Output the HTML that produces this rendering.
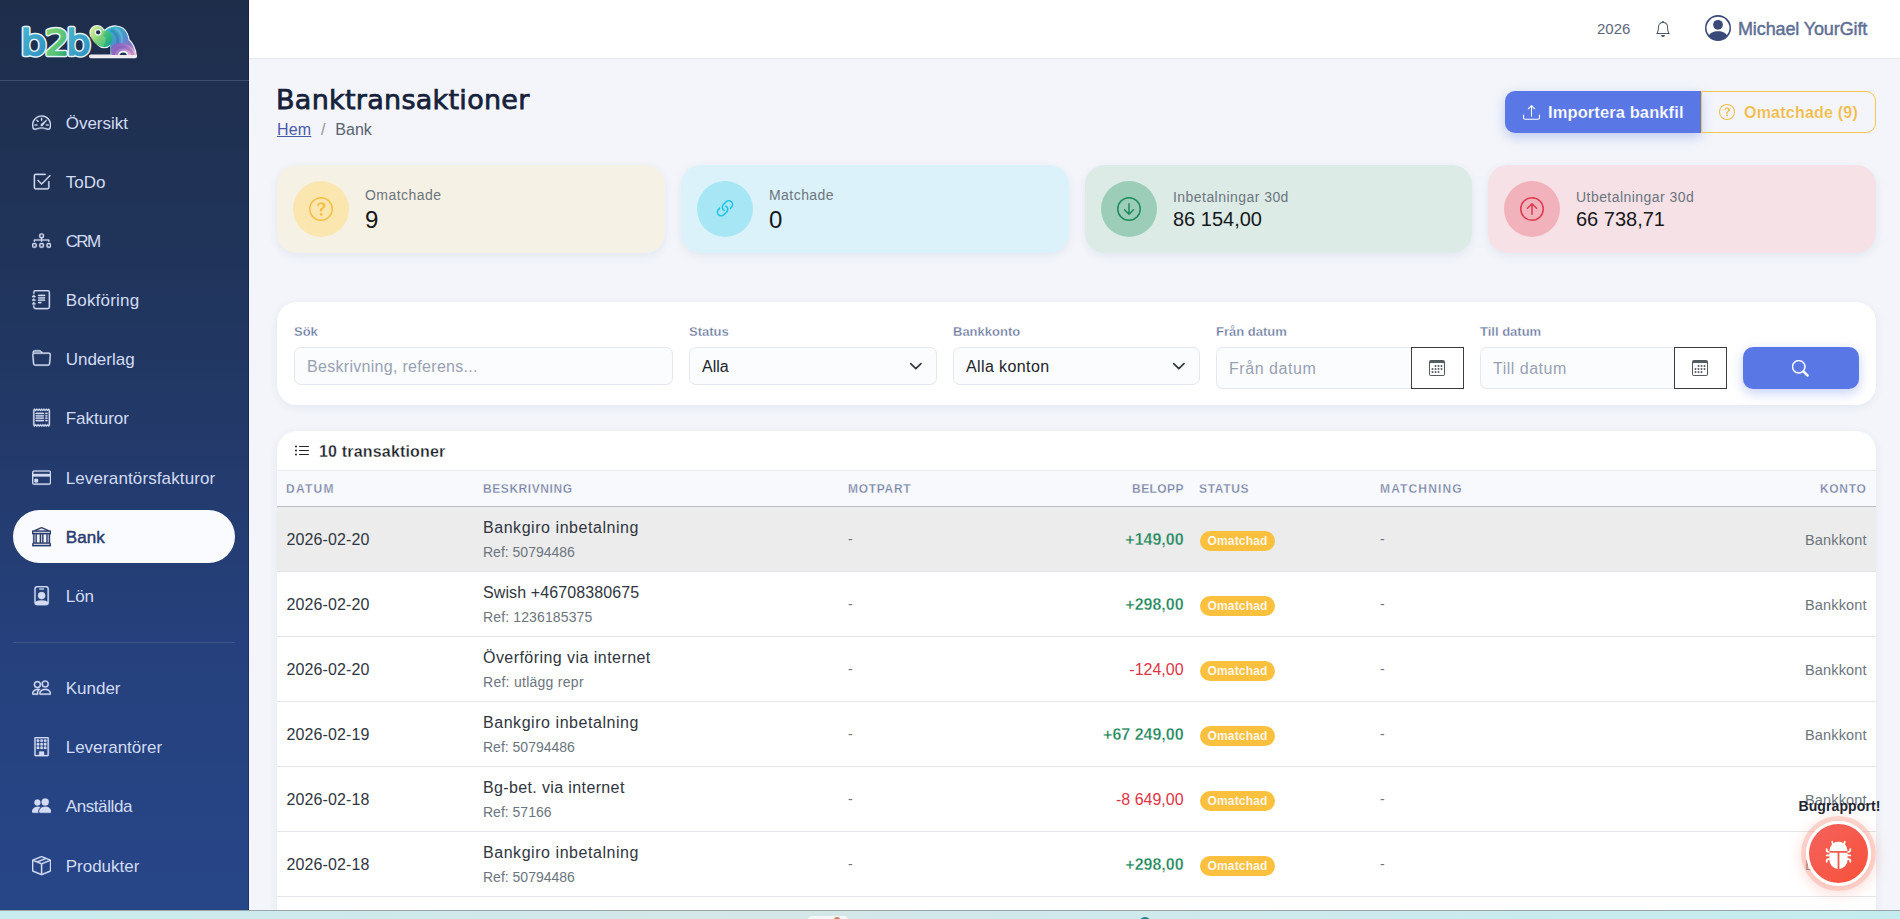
<!DOCTYPE html>
<html lang="sv">
<head>
<meta charset="utf-8">
<title>Banktransaktioner</title>
<style>
*{box-sizing:border-box;margin:0;padding:0}
html,body{width:1900px;height:919px;overflow:hidden}
body{font-family:"Liberation Sans",sans-serif;font-size:16px;color:#212529;background:#f3f5fa;position:relative}
svg{display:block}
.abs{position:absolute}
/* sidebar */
#sidebar{position:absolute;left:0;top:0;width:249px;height:910px;box-shadow:inset -1px 0 0 rgba(8,16,40,.3);background:linear-gradient(180deg,#1e2d4a 0%,#21365f 35%,#25407c 70%,#274688 100%)}
#logo{position:absolute;left:0;top:0;width:249px;height:81px;border-bottom:1px solid #3b4d6f}
.nav{position:absolute;left:13px;width:222px;height:52px;border-radius:26px;color:#d3dcf3;font-size:17px}
.nav svg{position:absolute;left:18.6px;top:16.4px;width:19.2px;height:19.2px;fill:currentColor;stroke:currentColor;stroke-width:.28px}
.nav span{position:absolute;left:52.7px;top:1px;line-height:52px;white-space:nowrap}
.nav.active{background:#fafbff;color:#2b3c6e;margin-top:-.7px;height:53px;border-radius:26.5px}
.nav.active svg{top:17.1px}.nav.active span{top:1.7px}
.nav.active span{-webkit-text-stroke:.45px #2b3c6e;letter-spacing:.1px}
#sdiv{position:absolute;left:13px;top:642px;width:222px;height:1px;background:#3f5688}
/* topbar */
#topbar{position:absolute;left:249px;top:0;width:1651px;height:59px;background:#fff;border-bottom:1px solid #e3e6ec}
/* bottom strip */
#strip{position:absolute;left:0;top:910px;width:1900px;height:9px;background:linear-gradient(90deg,#c9ecee 0%,#d5e6e8 40%,#cfe9ec 60%,#c4ecef 100%);border-top:1px solid #9aa5a8}

/* topbar content */
#year{position:absolute;left:1348px;top:0;line-height:58px;font-size:15px;color:#5d6778}
#bell{position:absolute;left:1405.6px;top:21px;width:16px;height:16px;fill:#4a5568}
#avatar{position:absolute;left:1455.5px;top:14.8px;width:26px;height:26px;fill:#3a4a78}
#uname{position:absolute;left:1489px;top:0;line-height:58px;font-size:18px;color:#5e6f94;letter-spacing:-.12px;-webkit-text-stroke:.45px #5e6f94;white-space:nowrap}
/* header */
#title{position:absolute;left:276px;top:81px;letter-spacing:.28px;font-family:"DejaVu Sans","Liberation Sans",sans-serif;font-size:27px;line-height:38px;-webkit-text-stroke:.75px #16213a;color:#16213a;white-space:nowrap}
#crumb{position:absolute;left:277px;top:119px;font-size:16px;line-height:22px;color:#5a6270;white-space:nowrap}
#crumb a{letter-spacing:.2px;color:#4a5aa8;text-decoration:underline}
#crumb i{font-style:normal;color:#8a93a3;padding:0 10px 0 9.5px}
#btn1{position:absolute;left:1505px;top:91px;width:196px;height:42px;background:#5a77e6;border-radius:10px 0 0 10px;color:#fff;font-weight:bold;font-size:16.5px;letter-spacing:.1px;line-height:42px;box-shadow:0 4px 12px rgba(90,119,230,.35)}
#btn1 svg{position:absolute;left:17.5px;top:12.6px;width:17px;height:17px;fill:#fff}
#btn1 span{position:absolute;left:43px;top:0;white-space:nowrap}
#btn2{position:absolute;left:1701px;top:91px;width:175px;height:42px;border:1px solid #f5c451;border-radius:0 10px 10px 0;color:#f2bb45;font-weight:bold;font-size:16px;letter-spacing:.22px;line-height:41px}
#btn2 svg{position:absolute;left:17px;top:12px;width:16px;height:16px;fill:#f2bb45}
#btn2 span{position:absolute;left:42px;top:0;white-space:nowrap}
/* stat cards */
.stat{position:absolute;top:165px;height:88px;border-radius:20px;box-shadow:0 3px 10px rgba(40,60,120,.08)}
.stat .circ{position:absolute;left:16px;top:16px;width:56px;height:56px;border-radius:50%}
.stat .circ svg{position:absolute;left:16px;top:16px;width:24px;height:24px}
.stat .lbl{position:absolute;left:88px;top:20px;letter-spacing:.45px;font-size:14px;line-height:20px;color:#6c757d;white-space:nowrap}
.stat .val{position:absolute;left:88px;top:40px;font-size:20px;line-height:28px;color:#16181b;white-space:nowrap}

/* filter card */
#filter{position:absolute;left:277px;top:301.5px;width:1599px;height:103px;background:#fff;border-radius:20px;box-shadow:0 2px 10px rgba(40,60,120,.07)}
.flbl{position:absolute;top:21.5px;font-size:13px;line-height:18px;font-weight:bold;color:#6b7a9f;white-space:nowrap}
.finp{position:absolute;top:45.5px;height:38px;border:1px solid #e4e7ee;border-radius:7px;background:#fbfcfe;font-size:16px;line-height:38px;padding-left:12px;color:#212529;white-space:nowrap}
.finp.ph{color:#98a1b3}
.finp svg{position:absolute;right:13px;top:12.75px;width:13.7px;height:10.3px}
.fdate{height:42px;line-height:42px;border-radius:7px 0 0 7px;border-right:none}
.fcal{position:absolute;top:45.5px;width:53px;height:42px;border:1px solid #3d3d3d;background:#fff}
.fcal svg{position:absolute;left:17.2px;top:12px;width:16px;height:16px;fill:#555b63}
#fsearch{position:absolute;left:1466px;top:45.5px;width:116px;height:42px;border-radius:10px;background:#5a77e6;box-shadow:0 4px 12px rgba(90,119,230,.35)}
#fsearch svg{position:absolute;left:49.2px;top:13px;width:16.6px;height:16.6px;fill:#fff;stroke:#fff;stroke-width:.5px}
/* table card */
#tcard>div{margin-top:-.7px}
#tcard{position:absolute;left:277px;top:430.7px;width:1599px;height:520px;background:#fff;border-radius:20px 20px 0 0;box-shadow:0 2px 10px rgba(40,60,120,.07);overflow:hidden}
#thead1{position:absolute;left:0;top:0;width:100%;height:41px;border-bottom:1px solid #e6e9ef}
#thead1 svg{position:absolute;left:17px;top:13px;width:16px;height:16px;fill:#212529}
#thead1 span{position:absolute;left:42px;top:0;line-height:44px;letter-spacing:.18px;font-size:16px;font-weight:bold;color:#1b1f27;white-space:nowrap}
#thead2{position:absolute;left:0;top:41px;width:100%;height:36px;background:#f8f9fc;border-bottom:1px solid #b9bcc2}
.th{position:absolute;top:0;line-height:37px;font-size:12px;font-weight:bold;letter-spacing:1px;color:#7683a5;white-space:nowrap}
.tr{position:absolute;left:0;width:100%;height:65px;border-bottom:1px solid #e3e5ea}
.tr.hov{background:#ececec}
.tr div{position:absolute;white-space:nowrap}
.c1{left:9.5px;top:0;line-height:66px;letter-spacing:.12px;font-size:16px;color:#2f3640}
.c2a{left:206px;top:9px;line-height:24px;font-size:16px;color:#2f3640}
.c2b{left:206px;top:35px;line-height:21px;font-size:14px;color:#6c757d}
.c3{left:571px;top:0;line-height:65px;font-size:14px;color:#6c757d}
.c4{right:692.4px;top:0;line-height:66px;font-size:16px}
.c4.pos{color:#1a8558;font-weight:bold}
.c4.neg{color:#dc3545}
.c5{left:923px;top:24px;width:75px;height:20px;border-radius:10px;background:#f8c13f;color:#fff;font-size:12px;letter-spacing:.18px;font-weight:bold;line-height:20px;text-align:center;background:#fbc03d}
.c6{left:1103px;top:0;line-height:65px;font-size:14px;color:#6c757d}
.c7{right:9.3px;top:0;line-height:67px;letter-spacing:.15px;font-size:14.5px;color:#6c757d}

#buglbl{position:absolute;left:1798.5px;top:796px;font-size:14px;letter-spacing:.1px;font-weight:bold;line-height:20px;color:#1e2530;white-space:nowrap}
#bug{position:absolute;left:1806.3px;top:821.3px;width:65px;height:65px;border-radius:50%;background:linear-gradient(135deg,#f4625c,#f8513a);border:3.5px solid #fff;box-shadow:0 0 0 5px rgba(250,150,130,.33),0 3px 14px 5px rgba(250,130,110,.28)}
#bug svg{position:absolute;left:14.5px;top:15.5px;width:29px;height:29px;fill:#fff}
.stat .val.big{font-size:24px;top:39px;line-height:32px}
.stat .lbl.low{top:22px}
#strip i{position:absolute;display:block}

.th{-webkit-text-stroke:.28px #f8f9fc}
#thead1 span{-webkit-text-stroke:.28px #fff}
.flbl{-webkit-text-stroke:.28px #fff}
#btn1 span{-webkit-text-stroke:.18px #5a77e6}
#btn2 span{-webkit-text-stroke:.18px #f3f5fa}
.c5{-webkit-text-stroke:.2px #fbc03d}
.c4.pos{-webkit-text-stroke:.3px #fff}
.tr.hov .c4.pos{-webkit-text-stroke:.3px #ececec}
</style>
</head>
<body>
<div id="sidebar">
  <div id="logo"><!--LOGO--><svg id="logosvg" viewBox="0 0 1900 702" style="position:absolute;left:15px;top:18px;width:130px;height:48px;overflow:visible">
<defs>
<linearGradient id="gB" x1="0" y1="0" x2="1" y2="1"><stop offset="0" stop-color="#4ab8d0"/><stop offset="1" stop-color="#2f8cc0"/></linearGradient>
<linearGradient id="g2" x1="0" y1="0" x2="1" y2="1"><stop offset="0" stop-color="#93d568"/><stop offset="0.6" stop-color="#55c27a"/><stop offset="1" stop-color="#0f8c5a"/></linearGradient>
<linearGradient id="gT" x1="0" y1="0.1" x2="1" y2="0.9"><stop offset="0" stop-color="#a5dc7c"/><stop offset="0.45" stop-color="#3fbf7a"/><stop offset="1" stop-color="#12a090"/></linearGradient>
<linearGradient id="gBody" x1="0.1" y1="0" x2="0.9" y2="1"><stop offset="0" stop-color="#35b9c0"/><stop offset="0.45" stop-color="#4a93cf"/><stop offset="0.75" stop-color="#8a72c6"/><stop offset="1" stop-color="#eab0cc"/></linearGradient>
<linearGradient id="gLeg" x1="0" y1="0" x2="1" y2="0.7"><stop offset="0" stop-color="#7457bd"/><stop offset="0.5" stop-color="#a57bc8"/><stop offset="1" stop-color="#f0b6cf"/></linearGradient>
<linearGradient id="gR" x1="0" y1="0.2" x2="1" y2="1"><stop offset="0" stop-color="#dcec98"/><stop offset="0.6" stop-color="#9bd97a"/><stop offset="1" stop-color="#4fc47c"/></linearGradient>
<linearGradient id="gT2" x1="0" y1="0" x2="1" y2="1"><stop offset="0" stop-color="#c3e48a"/><stop offset="0.5" stop-color="#7fd07a"/><stop offset="1" stop-color="#3fbf7a"/></linearGradient>
</defs>
<g font-family="'DejaVu Sans','Liberation Sans',sans-serif" font-size="515" stroke-linejoin="round" stroke-linecap="round">
<g fill="#e6f5fa" stroke="#e6f5fa" stroke-width="64">
<text transform="translate(78 540) scale(1.17 1)">b</text><text transform="translate(433 540) scale(1.1 1)">2</text><text transform="translate(750 540) scale(1.1 1)">b</text>
</g>
<g stroke-width="24">
<text transform="translate(78 540) scale(1.17 1)" fill="url(#gB)" stroke="url(#gB)">b</text><text transform="translate(433 540) scale(1.1 1)" fill="url(#g2)" stroke="url(#g2)">2</text><text transform="translate(750 540) scale(1.1 1)" fill="url(#gB)" stroke="url(#gB)">b</text>
</g>
</g>
<!-- elephant: white outline -->
<g fill="#eef6fb" stroke="#eef6fb" stroke-width="32" stroke-linejoin="round">
<circle cx="1200" cy="215" r="98"/>
<circle cx="1305" cy="305" r="122"/>
<path d="M1318 185 C1370 138 1430 122 1480 124 C1555 128 1610 170 1635 232 C1650 270 1656 298 1660 320 C1715 372 1758 452 1766 555 L1412 555 L1412 400 Z"/>
<rect x="1098" y="548" width="670" height="24" rx="12"/>
</g>
<!-- body -->
<path d="M1318 185 C1370 138 1430 122 1480 124 C1555 128 1610 170 1635 232 C1650 270 1656 298 1660 320 C1715 372 1758 452 1766 555 L1412 555 L1380 300 Z" fill="url(#gBody)"/>
<path d="M1400 175 C1485 210 1525 305 1492 410" fill="none" stroke="#2a78b0" stroke-opacity=".5" stroke-width="42"/>
<path d="M1470 150 C1555 200 1585 295 1556 390" fill="none" stroke="#8fd0e6" stroke-opacity=".35" stroke-width="36"/>
<!-- rear leg arch -->
<path d="M1412 555 L1412 440 C1430 385 1500 362 1570 368 C1690 385 1760 465 1768 555Z" fill="url(#gLeg)"/>
<path d="M1440 555 C1440 440 1560 400 1640 440 C1700 470 1720 520 1722 555" fill="none" stroke="#6a4db5" stroke-opacity=".35" stroke-width="40"/>
<!-- head disc + trunk -->
<circle cx="1305" cy="305" r="122" fill="url(#gT)"/>
<path d="M1103 235 C1110 330 1190 420 1300 425 L1330 300 L1250 215Z" fill="url(#gT2)"/>
<circle cx="1200" cy="215" r="98" fill="url(#gR)"/>
<!-- trunk hole -->
<circle cx="1215" cy="210" r="50" fill="#eef6fb"/>
<circle cx="1215" cy="210" r="31" fill="#1f3050"/>
<!-- gap between legs -->
<path d="M1505 555 C1505 455 1660 455 1660 555Z" fill="#eef6fb"/>
<path d="M1528 555 C1528 490 1637 490 1637 555Z" fill="#1f3050"/>
<!-- ground -->
<rect x="1088" y="540" width="682" height="38" rx="19" fill="#f1e9ef"/>
</svg>
<!--/LOGO--></div>
  <div id="sdiv"></div>
  <div class="nav" style="top:97px"><svg viewBox="0 0 16 16"><path d="M8 4a.5.5 0 0 1 .5.5V6a.5.5 0 0 1-1 0V4.500A.5.500 0 0 1 8 4M3.732 5.732a.5.500 0 0 1 .707 0l.915.914a.5.500 0 1 1-.708.708l-.914-.915a.5.500 0 0 1 0-.707M2 10a.5.500 0 0 1 .5-.5h1.586a.5.500 0 0 1 0 1H2.500A.5.500 0 0 1 2 10m9.500 0a.5.500 0 0 1 .5-.5h1.500a.5.500 0 0 1 0 1H12a.5.500 0 0 1-.5-.5m.754-4.246a.39.390 0 0 0-.527-.020L7.547 9.310a.91.910 0 1 0 1.302 1.258l3.434-4.297a.39.390 0 0 0-.029-.518z"/><path fill-rule="evenodd" d="M0 10a8 8 0 1 1 15.547 2.661c-.442 1.253-1.845 1.602-2.932 1.250C11.309 13.488 9.475 13 8 13c-1.474 0-3.310.488-4.615.911-1.087.352-2.490.003-2.932-1.250A8 8 0 0 1 0 10m8-7a7 7 0 0 0-6.603 9.329c.203.575.923.876 1.680.630C4.397 12.533 6.358 12 8 12s3.604.532 4.923.960c.757.245 1.477-.056 1.680-.631A7 7 0 0 0 8 3"/></svg><span>Översikt</span></div>
  <div class="nav" style="top:156px"><svg viewBox="0 0 16 16"><path d="M3 14.500A1.500 1.500 0 0 1 1.500 13V3A1.500 1.500 0 0 1 3 1.500h8a.5.500 0 0 1 0 1H3a.5.500 0 0 0-.5.5v10a.5.500 0 0 0 .5.5h10a.5.500 0 0 0 .5-.5V8a.5.500 0 0 1 1 0v5a1.500 1.500 0 0 1-1.500 1.500z"/><path d="m8.354 10.354 7-7a.5.500 0 0 0-.708-.708L8 9.293 5.354 6.646a.5.500 0 1 0-.708.708l3 3a.5.500 0 0 0 .708 0"/></svg><span>ToDo</span></div>
  <div class="nav" style="top:215px"><svg viewBox="0 0 16 16"><path fill-rule="evenodd" d="M6 3.500A1.500 1.500 0 0 1 7.500 2h1A1.500 1.500 0 0 1 10 3.500v1A1.500 1.500 0 0 1 8.500 6v1H14a.5.500 0 0 1 .5.5v1a.5.500 0 0 1-1 0V8h-5v.5a.5.500 0 0 1-1 0V8h-5v.5a.5.500 0 0 1-1 0v-1A.5.500 0 0 1 2 7h5.500V6A1.500 1.500 0 0 1 6 4.500zM8.500 5a.5.500 0 0 0 .5-.5v-1a.5.500 0 0 0-.5-.5h-1a.5.500 0 0 0-.5.5v1a.5.500 0 0 0 .5.5zM0 11.500A1.500 1.500 0 0 1 1.500 10h1A1.500 1.500 0 0 1 4 11.500v1A1.500 1.500 0 0 1 2.500 14h-1A1.500 1.500 0 0 1 0 12.500zm1.500-.5a.5.500 0 0 0-.5.5v1a.5.500 0 0 0 .5.5h1a.5.500 0 0 0 .5-.5v-1a.5.500 0 0 0-.5-.5zm4.500.5A1.500 1.500 0 0 1 7.500 10h1a1.500 1.500 0 0 1 1.500 1.500v1A1.500 1.500 0 0 1 8.500 14h-1A1.500 1.500 0 0 1 6 12.500zm1.500-.5a.5.500 0 0 0-.5.5v1a.5.500 0 0 0 .5.5h1a.5.500 0 0 0 .5-.5v-1a.5.500 0 0 0-.5-.5zm4.500.5a1.500 1.500 0 0 1 1.500-1.500h1a1.500 1.500 0 0 1 1.500 1.500v1a1.500 1.500 0 0 1-1.500 1.500h-1a1.500 1.500 0 0 1-1.500-1.500zm1.500-.5a.5.500 0 0 0-.5.5v1a.5.500 0 0 0 .5.5h1a.5.500 0 0 0 .5-.5v-1a.5.500 0 0 0-.5-.5z"/></svg><span style="letter-spacing:-1.6px">CRM</span></div>
  <div class="nav" style="top:274px"><svg viewBox="0 0 16 16"><path d="M5 10.500a.5.500 0 0 1 .5-.5h2a.5.500 0 0 1 0 1h-2a.5.500 0 0 1-.5-.5m0-2a.5.500 0 0 1 .5-.5h5a.5.500 0 0 1 0 1h-5a.5.500 0 0 1-.5-.5m0-2a.5.500 0 0 1 .5-.5h5a.5.500 0 0 1 0 1h-5a.5.500 0 0 1-.5-.5m0-2a.5.500 0 0 1 .5-.5h5a.5.500 0 0 1 0 1h-5a.5.500 0 0 1-.5-.5"/><path d="M3 0h10a2 2 0 0 1 2 2v12a2 2 0 0 1-2 2H3a2 2 0 0 1-2-2v-1h1v1a1 1 0 0 0 1 1h10a1 1 0 0 0 1-1V2a1 1 0 0 0-1-1H3a1 1 0 0 0-1 1v1H1V2a2 2 0 0 1 2-2"/><path d="M1 5v-.5a.5.500 0 0 1 1 0V5h.5a.5.500 0 0 1 0 1h-2a.5.500 0 0 1 0-1zm0 3v-.5a.5.500 0 0 1 1 0V8h.5a.5.500 0 0 1 0 1h-2a.5.500 0 0 1 0-1zm0 3v-.5a.5.500 0 0 1 1 0v.5h.5a.5.500 0 0 1 0 1h-2a.5.500 0 0 1 0-1z"/></svg><span style="letter-spacing:.2px">Bokföring</span></div>
  <div class="nav" style="top:333px"><svg viewBox="0 0 16 16"><path d="M.54 3.870.5 3a2 2 0 0 1 2-2h3.672a2 2 0 0 1 1.414.586l.828.828A2 2 0 0 0 9.828 3h3.982a2 2 0 0 1 1.992 2.181l-.637 7A2 2 0 0 1 13.174 14H2.826a2 2 0 0 1-1.991-1.819l-.637-7a2 2 0 0 1 .342-1.310zM2.190 4a1 1 0 0 0-.996 1.090l.637 7a1 1 0 0 0 .995.910h10.348a1 1 0 0 0 .995-.910l.637-7A1 1 0 0 0 13.810 4zm4.690-1.707A1 1 0 0 0 6.172 2H2.500a1 1 0 0 0-1 .981l.006.139q.323-.119.684-.120h5.396z"/></svg><span>Underlag</span></div>
  <div class="nav" style="top:392px"><svg viewBox="0 0 16 16"><path d="M1.920.506a.5.500 0 0 1 .434.140L3 1.293l.646-.647a.5.500 0 0 1 .708 0L5 1.293l.646-.647a.5.500 0 0 1 .708 0L7 1.293l.646-.647a.5.500 0 0 1 .708 0L9 1.293l.646-.647a.5.500 0 0 1 .708 0l.646.647.646-.647a.5.500 0 0 1 .708 0l.646.647.646-.647a.5.500 0 0 1 .801.130l.5 1A.5.500 0 0 1 15 2v12a.5.500 0 0 1-.053.224l-.5 1a.5.500 0 0 1-.8.130L13 14.707l-.646.647a.5.500 0 0 1-.708 0L11 14.707l-.646.647a.5.500 0 0 1-.708 0L9 14.707l-.646.647a.5.500 0 0 1-.708 0L7 14.707l-.646.647a.5.500 0 0 1-.708 0L5 14.707l-.646.647a.5.500 0 0 1-.708 0L3 14.707l-.646.647a.5.500 0 0 1-.801-.130l-.5-1A.5.500 0 0 1 1 14V2a.5.500 0 0 1 .053-.224l.5-1a.5.500 0 0 1 .367-.270m.217 1.338L2 2.118v11.764l.137.274.510-.510a.5.500 0 0 1 .707 0l.646.647.646-.646a.5.500 0 0 1 .708 0l.646.646.646-.646a.5.500 0 0 1 .708 0l.646.646.646-.646a.5.500 0 0 1 .708 0l.646.646.646-.646a.5.500 0 0 1 .708 0l.646.646.646-.646a.5.500 0 0 1 .708 0l.509.509.137-.274V2.118l-.137-.274-.510.510a.5.500 0 0 1-.707 0L12 1.707l-.646.647a.5.500 0 0 1-.708 0L10 1.707l-.646.647a.5.500 0 0 1-.708 0L8 1.707l-.646.647a.5.500 0 0 1-.708 0L6 1.707l-.646.647a.5.500 0 0 1-.708 0L4 1.707l-.646.647a.5.500 0 0 1-.708 0z"/><path d="M3 4.500a.5.500 0 0 1 .5-.5h6a.5.500 0 1 1 0 1h-6a.5.500 0 0 1-.5-.5m0 2a.5.500 0 0 1 .5-.5h6a.5.500 0 1 1 0 1h-6a.5.500 0 0 1-.5-.5m0 2a.5.500 0 0 1 .5-.5h6a.5.500 0 1 1 0 1h-6a.5.500 0 0 1-.5-.5m0 2a.5.500 0 0 1 .5-.5h6a.5.500 0 0 1 0 1h-6a.5.500 0 0 1-.5-.5m8-6a.5.500 0 0 1 .5-.5h1a.5.500 0 0 1 0 1h-1a.5.500 0 0 1-.5-.5m0 2a.5.500 0 0 1 .5-.5h1a.5.500 0 0 1 0 1h-1a.5.500 0 0 1-.5-.5m0 2a.5.500 0 0 1 .5-.5h1a.5.500 0 0 1 0 1h-1a.5.500 0 0 1-.5-.5m0 2a.5.500 0 0 1 .5-.5h1a.5.500 0 0 1 0 1h-1a.5.500 0 0 1-.5-.5"/></svg><span>Fakturor</span></div>
  <div class="nav" style="top:452px"><svg viewBox="0 0 16 16"><path d="M0 4a2 2 0 0 1 2-2h12a2 2 0 0 1 2 2v8a2 2 0 0 1-2 2H2a2 2 0 0 1-2-2zm2-1a1 1 0 0 0-1 1v1h14V4a1 1 0 0 0-1-1zm13 4H1v5a1 1 0 0 0 1 1h12a1 1 0 0 0 1-1z"/><path d="M2 10a1 1 0 0 1 1-1h1a1 1 0 0 1 1 1v1a1 1 0 0 1-1 1H3a1 1 0 0 1-1-1z"/></svg><span style="letter-spacing:.12px">Leverantörsfakturor</span></div>
  <div class="nav active" style="top:511px"><svg viewBox="0 0 16 16"><path d="m8 0 6.610 3h.890a.5.500 0 0 1 .5.5v2a.5.500 0 0 1-.5.5H15v7a.5.500 0 0 1 .485.380l.5 2a.498.498 0 0 1-.485.620H.5a.498.498 0 0 1-.485-.620l.5-2A.5.500 0 0 1 1 13V6H.5a.5.500 0 0 1-.5-.5v-2A.5.500 0 0 1 .5 3h.890zM3.777 3h8.447L8 1zM2 6v7h1V6zm2 0v7h2.500V6zm3.500 0v7h1V6zm2 0v7H12V6zM13 6v7h1V6zm2-1V4H1v1zm-.390 9H1.390l-.250 1h13.720z"/></svg><span>Bank</span></div>
  <div class="nav" style="top:570px"><svg viewBox="0 0 16 16"><path d="M6.500 2a.5.500 0 0 0 0 1h3a.5.500 0 0 0 0-1zM11 8a3 3 0 1 1-6 0 3 3 0 0 1 6 0"/><path d="M4.500 0A2.500 2.500 0 0 0 2 2.500V14a2 2 0 0 0 2 2h8a2 2 0 0 0 2-2V2.500A2.500 2.500 0 0 0 11.500 0zM3 2.500A1.500 1.500 0 0 1 4.500 1h7A1.500 1.500 0 0 1 13 2.500v10.795a4.200 4.200 0 0 0-.776-.492C11.392 12.387 10.063 12 8 12s-3.392.387-4.224.803a4.200 4.200 0 0 0-.776.492z"/></svg><span>Lön</span></div>
  <div class="nav" style="top:662px"><svg viewBox="0 0 16 16"><path d="M15 14s1 0 1-1-1-4-5-4-5 3-5 4 1 1 1 1zm-7.978-1L7 12.996c.001-.264.167-1.030.760-1.720C8.312 10.629 9.282 10 11 10c1.717 0 2.687.630 3.240 1.276.593.690.758 1.457.760 1.720l-.8.002-.14.002zM11 7a2 2 0 1 0 0-4 2 2 0 0 0 0 4m3-2a3 3 0 1 1-6 0 3 3 0 0 1 6 0M6.936 9.280a6 6 0 0 0-1.230-.247A7 7 0 0 0 5 9c-4 0-5 3-5 4q0 1 1 1h4.216A2.240 2.240 0 0 1 5 13c0-1.010.377-2.042 1.090-2.904.243-.294.526-.569.846-.816M4.920 10A5.500 5.500 0 0 0 4 13H1c0-.260.164-1.030.760-1.724.545-.636 1.492-1.256 3.160-1.275ZM1.500 5.500a3 3 0 1 1 6 0 3 3 0 0 1-6 0m3-2a2 2 0 1 0 0 4 2 2 0 0 0 0-4"/></svg><span>Kunder</span></div>
  <div class="nav" style="top:721px"><svg viewBox="0 0 16 16"><path d="M4 2.500a.5.500 0 0 1 .5-.5h1a.5.500 0 0 1 .5.5v1a.5.500 0 0 1-.5.5h-1a.5.500 0 0 1-.5-.5zm3 0a.5.500 0 0 1 .5-.5h1a.5.500 0 0 1 .5.5v1a.5.500 0 0 1-.5.5h-1a.5.500 0 0 1-.5-.5zm3.500-.5a.5.500 0 0 0-.5.5v1a.5.500 0 0 0 .5.5h1a.5.500 0 0 0 .5-.5v-1a.5.500 0 0 0-.5-.5zM4 5.500a.5.500 0 0 1 .5-.5h1a.5.500 0 0 1 .5.5v1a.5.500 0 0 1-.5.5h-1a.5.500 0 0 1-.5-.5zM7.500 5a.5.500 0 0 0-.5.5v1a.5.500 0 0 0 .5.5h1a.5.500 0 0 0 .5-.5v-1a.5.500 0 0 0-.5-.5zm2.500.5a.5.500 0 0 1 .5-.5h1a.5.500 0 0 1 .5.5v1a.5.500 0 0 1-.5.5h-1a.5.500 0 0 1-.5-.5zM4.500 8a.5.500 0 0 0-.5.5v1a.5.500 0 0 0 .5.5h1a.5.500 0 0 0 .5-.5v-1a.5.500 0 0 0-.5-.5zm2.500.5a.5.500 0 0 1 .5-.5h1a.5.500 0 0 1 .5.5v1a.5.500 0 0 1-.5.5h-1a.5.500 0 0 1-.5-.5zm3.500-.5a.5.500 0 0 0-.5.5v1a.5.500 0 0 0 .5.5h1a.5.500 0 0 0 .5-.5v-1a.5.500 0 0 0-.5-.5z"/><path d="M2 1a1 1 0 0 1 1-1h10a1 1 0 0 1 1 1v14a1 1 0 0 1-1 1H3a1 1 0 0 1-1-1zm11 0H3v14h3v-2.500a.5.500 0 0 1 .5-.5h3a.5.500 0 0 1 .5.5V15h3z"/></svg><span>Leverantörer</span></div>
  <div class="nav" style="top:780px"><svg viewBox="0 0 16 16"><path d="M7 14s-1 0-1-1 1-4 5-4 5 3 5 4-1 1-1 1zm4-6a3 3 0 1 0 0-6 3 3 0 0 0 0 6m-5.784 6A2.240 2.240 0 0 1 5 13c0-1.355.680-2.750 1.936-3.720A6.300 6.300 0 0 0 5 9c-4 0-5 3-5 4s1 1 1 1zM4.500 8a2.500 2.500 0 1 0 0-5 2.500 2.500 0 0 0 0 5"/></svg><span style="letter-spacing:-.4px">Anställda</span></div>
  <div class="nav" style="top:840px"><svg viewBox="0 0 16 16"><path d="M8.186 1.113a.5.500 0 0 0-.372 0L1.846 3.500l2.404.961L10.404 2zm3.564 1.426L5.596 5 8 5.961 14.154 3.500zm3.250 1.700-6.500 2.600v7.922l6.500-2.600V4.240zM7.500 14.762V6.838L1 4.239v7.923zM7.443.184a1.500 1.500 0 0 1 1.114 0l7.129 2.852A.5.500 0 0 1 16 3.500v8.662a1 1 0 0 1-.629.928l-7.185 2.874a.5.500 0 0 1-.372 0L.630 13.090a1 1 0 0 1-.630-.928V3.500a.5.500 0 0 1 .314-.464z"/></svg><span>Produkter</span></div>
</div>
<div id="topbar">
  <div id="year">2026</div>
  <svg id="bell" viewBox="0 0 16 16"><path d="M8 16a2 2 0 0 0 2-2H6a2 2 0 0 0 2 2M8 1.918l-.797.161A4 4 0 0 0 4 6c0 .628-.134 2.197-.459 3.742-.160.767-.376 1.566-.663 2.258h10.244c-.287-.692-.502-1.490-.663-2.258C12.134 8.197 12 6.628 12 6a4 4 0 0 0-3.203-3.920zM14.220 12c.223.447.481.801.780 1H1c.299-.199.557-.553.780-1C2.680 10.200 3 6.880 3 6c0-2.420 1.720-4.440 4.005-4.901a1 1 0 1 1 1.990 0A5 5 0 0 1 13 6c0 .880.320 4.200 1.220 6"/></svg>
  <svg id="avatar" viewBox="0 0 16 16"><path d="M11 6a3 3 0 1 1-6 0 3 3 0 0 1 6 0"/><path fill-rule="evenodd" d="M0 8a8 8 0 1 1 16 0A8 8 0 0 1 0 8m8-7a7 7 0 0 0-5.468 11.370C3.242 11.226 4.805 10 8 10s4.757 1.225 5.468 2.370A7 7 0 0 0 8 1"/></svg>
  <div id="uname">Michael YourGift</div>
</div>
<div id="main">
  <div id="title">Banktransaktioner</div>
  <div id="crumb"><a>Hem</a><i>/</i>Bank</div>
  <div id="btn1"><svg viewBox="0 0 16 16"><path d="M.5 9.900a.5.500 0 0 1 .5.5v2.500a1 1 0 0 0 1 1h12a1 1 0 0 0 1-1v-2.500a.5.500 0 0 1 1 0v2.500a2 2 0 0 1-2 2H2a2 2 0 0 1-2-2v-2.500a.5.500 0 0 1 .5-.5"/><path d="M7.646 1.146a.5.500 0 0 1 .708 0l3 3a.5.500 0 0 1-.708.708L8.500 2.707V11.500a.5.500 0 0 1-1 0V2.707L5.354 4.854a.5.500 0 1 1-.708-.708z"/></svg><span>Importera bankfil</span></div>
  <div id="btn2"><svg viewBox="0 0 16 16"><path d="M8 15A7 7 0 1 1 8 1a7 7 0 0 1 0 14m0 1A8 8 0 1 0 8 0a8 8 0 0 0 0 16"/><path d="M5.255 5.786a.237.237 0 0 0 .241.247h.825c.138 0 .248-.113.266-.250.090-.656.540-1.134 1.342-1.134.686 0 1.314.343 1.314 1.168 0 .635-.374.927-.965 1.371-.673.489-1.206 1.060-1.168 1.987l.3.217a.25.250 0 0 0 .250.246h.811a.25.250 0 0 0 .250-.250v-.105c0-.718.273-.927 1.010-1.486.609-.463 1.244-.977 1.244-2.056 0-1.511-1.276-2.241-2.673-2.241-1.267 0-2.655.590-2.750 2.286m1.557 5.763c0 .533.425.927 1.010.927.609 0 1.028-.394 1.028-.927 0-.552-.420-.940-1.029-.940-.584 0-1.009.388-1.009.940"/></svg><span>Omatchade (9)</span></div>
  <div class="stat" style="left:277px;width:388px;background:#f5f1e4"><div class="circ" style="background:#fbe6af"><svg viewBox="0 0 16 16" fill="#f5bf45"><path d="M8 15A7 7 0 1 1 8 1a7 7 0 0 1 0 14m0 1A8 8 0 1 0 8 0a8 8 0 0 0 0 16"/><path d="M5.255 5.786a.237.237 0 0 0 .241.247h.825c.138 0 .248-.113.266-.250.090-.656.540-1.134 1.342-1.134.686 0 1.314.343 1.314 1.168 0 .635-.374.927-.965 1.371-.673.489-1.206 1.060-1.168 1.987l.3.217a.25.250 0 0 0 .250.246h.811a.25.250 0 0 0 .250-.250v-.105c0-.718.273-.927 1.010-1.486.609-.463 1.244-.977 1.244-2.056 0-1.511-1.276-2.241-2.673-2.241-1.267 0-2.655.590-2.750 2.286m1.557 5.763c0 .533.425.927 1.010.927.609 0 1.028-.394 1.028-.927 0-.552-.420-.940-1.029-.940-.584 0-1.009.388-1.009.940"/></svg></div><div class="lbl">Omatchade</div><div class="val big">9</div></div>
  <div class="stat" style="left:681px;width:388px;background:#dcf2fa"><div class="circ" style="background:#a7e6f5"><svg viewBox="0 0 16 16" fill="#19c3e6"><path d="M4.715 6.542 3.343 7.914a3 3 0 1 0 4.243 4.243l1.828-1.829A3 3 0 0 0 8.586 5.500L8 6.086a1 1 0 0 0-.154.199 2 2 0 0 1 .861 3.337L6.880 11.450a2 2 0 1 1-2.830-2.830l.793-.792a4 4 0 0 1-.128-1.287z"/><path d="M6.586 4.672A3 3 0 0 0 7.414 9.500l.775-.776a2 2 0 0 1-.896-3.346L9.120 3.550a2 2 0 1 1 2.830 2.830l-.793.792c.112.420.155.855.128 1.287l1.372-1.372a3 3 0 1 0-4.243-4.243z"/></svg></div><div class="lbl">Matchade</div><div class="val big">0</div></div>
  <div class="stat" style="left:1085px;width:387px;background:#dcebe6"><div class="circ" style="background:#9ccdb9"><svg viewBox="0 0 16 16" fill="#1f8a5a"><path fill-rule="evenodd" d="M1 8a7 7 0 1 0 14 0A7 7 0 0 0 1 8m15 0A8 8 0 1 1 0 8a8 8 0 0 1 16 0M8.500 4.500a.5.500 0 0 0-1 0v5.793L5.354 8.146a.5.500 0 1 0-.708.708l3 3a.5.500 0 0 0 .708 0l3-3a.5.500 0 0 0-.708-.708L8.500 10.293z"/></svg></div><div class="lbl low">Inbetalningar 30d</div><div class="val">86 154,00</div></div>
  <div class="stat" style="left:1488px;width:388px;background:#f5e1e6"><div class="circ" style="background:#f2b2bc"><svg viewBox="0 0 16 16" fill="#dc3a4d"><path fill-rule="evenodd" d="M1 8a7 7 0 1 0 14 0A7 7 0 0 0 1 8m15 0A8 8 0 1 1 0 8a8 8 0 0 1 16 0m-7.500 3.500a.5.500 0 0 1-1 0V5.707L5.354 7.854a.5.500 0 1 1-.708-.708l3-3a.5.500 0 0 1 .708 0l3 3a.5.500 0 0 1-.708.708L8.500 5.707z"/></svg></div><div class="lbl low">Utbetalningar 30d</div><div class="val">66 738,71</div></div>
  <div id="filter">
    <div class="flbl" style="left:17px">Sök</div>
    <div class="finp ph" style="left:17px;width:379px;letter-spacing:.3px">Beskrivning, referens...</div>
    <div class="flbl" style="left:412px">Status</div>
    <div class="finp" style="left:412px;width:248px">Alla<svg viewBox="0 0 16 12"><path fill="none" stroke="#343a40" stroke-linecap="round" stroke-linejoin="round" stroke-width="2" d="m2 3 6 6 6-6"/></svg></div>
    <div class="flbl" style="left:676px">Bankkonto</div>
    <div class="finp" style="left:676px;width:247px;letter-spacing:.4px">Alla konton<svg viewBox="0 0 16 12"><path fill="none" stroke="#343a40" stroke-linecap="round" stroke-linejoin="round" stroke-width="2" d="m2 3 6 6 6-6"/></svg></div>
    <div class="flbl" style="left:939px">Från datum</div>
    <div class="finp ph fdate" style="left:939px;width:196px;letter-spacing:.55px">Från datum</div>
    <div class="fcal" style="left:1134px"><svg viewBox="0 0 16 16"><path d="M14 0H2a2 2 0 0 0-2 2v12a2 2 0 0 0 2 2h12a2 2 0 0 0 2-2V2a2 2 0 0 0-2-2M1 3.857C1 3.384 1.448 3 2 3h12c.552 0 1 .384 1 .857v10.286c0 .473-.448.857-1 .857H2c-.552 0-1-.384-1-.857z"/><path d="M6.500 7a1 1 0 1 0 0-2 1 1 0 0 0 0 2m3 0a1 1 0 1 0 0-2 1 1 0 0 0 0 2m3 0a1 1 0 1 0 0-2 1 1 0 0 0 0 2m-9 3a1 1 0 1 0 0-2 1 1 0 0 0 0 2m3 0a1 1 0 1 0 0-2 1 1 0 0 0 0 2m3 0a1 1 0 1 0 0-2 1 1 0 0 0 0 2m3 0a1 1 0 1 0 0-2 1 1 0 0 0 0 2m-9 3a1 1 0 1 0 0-2 1 1 0 0 0 0 2m3 0a1 1 0 1 0 0-2 1 1 0 0 0 0 2m3 0a1 1 0 1 0 0-2 1 1 0 0 0 0 2"/></svg></div>
    <div class="flbl" style="left:1203px">Till datum</div>
    <div class="finp ph fdate" style="left:1203px;width:195px;letter-spacing:.5px">Till datum</div>
    <div class="fcal" style="left:1397px"><svg viewBox="0 0 16 16"><path d="M14 0H2a2 2 0 0 0-2 2v12a2 2 0 0 0 2 2h12a2 2 0 0 0 2-2V2a2 2 0 0 0-2-2M1 3.857C1 3.384 1.448 3 2 3h12c.552 0 1 .384 1 .857v10.286c0 .473-.448.857-1 .857H2c-.552 0-1-.384-1-.857z"/><path d="M6.500 7a1 1 0 1 0 0-2 1 1 0 0 0 0 2m3 0a1 1 0 1 0 0-2 1 1 0 0 0 0 2m3 0a1 1 0 1 0 0-2 1 1 0 0 0 0 2m-9 3a1 1 0 1 0 0-2 1 1 0 0 0 0 2m3 0a1 1 0 1 0 0-2 1 1 0 0 0 0 2m3 0a1 1 0 1 0 0-2 1 1 0 0 0 0 2m3 0a1 1 0 1 0 0-2 1 1 0 0 0 0 2m-9 3a1 1 0 1 0 0-2 1 1 0 0 0 0 2m3 0a1 1 0 1 0 0-2 1 1 0 0 0 0 2m3 0a1 1 0 1 0 0-2 1 1 0 0 0 0 2"/></svg></div>
    <div id="fsearch"><svg viewBox="0 0 16 16"><path d="M11.742 10.344a6.500 6.500 0 1 0-1.397 1.398h-.001q.044.060.098.115l3.850 3.850a1 1 0 0 0 1.415-1.414l-3.850-3.850a1 1 0 0 0-.115-.100zM12 6.500a5.500 5.500 0 1 1-11 0 5.500 5.500 0 0 1 11 0"/></svg></div>
  </div>
  <div id="tcard">
    <div id="thead1"><svg viewBox="0 0 16 16"><path fill-rule="evenodd" d="M5 11.500a.5.500 0 0 1 .5-.5h9a.5.500 0 0 1 0 1h-9a.5.500 0 0 1-.5-.5m0-4a.5.500 0 0 1 .5-.5h9a.5.500 0 0 1 0 1h-9a.5.500 0 0 1-.5-.5m0-4a.5.500 0 0 1 .5-.5h9a.5.500 0 0 1 0 1h-9a.5.500 0 0 1-.5-.5m-3 1a1 1 0 1 0 0-2 1 1 0 0 0 0 2m0 4a1 1 0 1 0 0-2 1 1 0 0 0 0 2m0 4a1 1 0 1 0 0-2 1 1 0 0 0 0 2"/></svg><span>10 transaktioner</span></div>
    <div id="thead2">
      <div class="th" style="left:9px;letter-spacing:1.26px">DATUM</div>
      <div class="th" style="left:206px;letter-spacing:.57px">BESKRIVNING</div>
      <div class="th" style="left:571px;letter-spacing:.71px">MOTPART</div>
      <div class="th" style="right:692.2px;letter-spacing:.4px">BELOPP</div>
      <div class="th" style="left:922px;letter-spacing:.65px">STATUS</div>
      <div class="th" style="left:1103px;letter-spacing:1.14px">MATCHNING</div>
      <div class="th" style="right:9.4px;letter-spacing:.72px">KONTO</div>
    </div>
    <div class="tr hov" style="top:77px"><div class="c1">2026-02-20</div><div class="c2a" style="letter-spacing:.55px">Bankgiro inbetalning</div><div class="c2b">Ref: 50794486</div><div class="c3">-</div><div class="c4 pos">+149,00</div><div class="c5">Omatchad</div><div class="c6">-</div><div class="c7">Bankkont</div></div>
    <div class="tr" style="top:142px"><div class="c1">2026-02-20</div><div class="c2a" style="letter-spacing:.1px">Swish +46708380675</div><div class="c2b" style="letter-spacing:.13px">Ref: 1236185375</div><div class="c3">-</div><div class="c4 pos">+298,00</div><div class="c5">Omatchad</div><div class="c6">-</div><div class="c7">Bankkont</div></div>
    <div class="tr" style="top:207px"><div class="c1">2026-02-20</div><div class="c2a" style="letter-spacing:.45px">Överföring via internet</div><div class="c2b" style="letter-spacing:.27px">Ref: utlägg repr</div><div class="c3">-</div><div class="c4 neg">-124,00</div><div class="c5">Omatchad</div><div class="c6">-</div><div class="c7">Bankkont</div></div>
    <div class="tr" style="top:272px"><div class="c1">2026-02-19</div><div class="c2a" style="letter-spacing:.55px">Bankgiro inbetalning</div><div class="c2b">Ref: 50794486</div><div class="c3">-</div><div class="c4 pos">+67 249,00</div><div class="c5">Omatchad</div><div class="c6">-</div><div class="c7">Bankkont</div></div>
    <div class="tr" style="top:337px"><div class="c1">2026-02-18</div><div class="c2a" style="letter-spacing:.37px">Bg-bet. via internet</div><div class="c2b">Ref: 57166</div><div class="c3">-</div><div class="c4 neg">-8 649,00</div><div class="c5">Omatchad</div><div class="c6">-</div><div class="c7">Bankkont</div></div>
    <div class="tr" style="top:402px"><div class="c1">2026-02-18</div><div class="c2a" style="letter-spacing:.55px">Bankgiro inbetalning</div><div class="c2b">Ref: 50794486</div><div class="c3">-</div><div class="c4 pos">+298,00</div><div class="c5">Omatchad</div><div class="c6">-</div><div class="c7">Bankkont</div></div>
  </div>
</div>
<div id="buglbl">Bugrapport!</div>
<div id="bug"><svg viewBox="0 0 16 16"><path d="M4.978.855a.5.500 0 1 0-.956.290l.410 1.352A5 5 0 0 0 3 6h10a5 5 0 0 0-1.432-3.503l.410-1.352a.5.500 0 1 0-.956-.290l-.291.956A5 5 0 0 0 8 1a5 5 0 0 0-2.731.811l-.290-.956z"/><path d="M13 6v1H8.500v8.975A5 5 0 0 0 13 11h.5a.5.500 0 0 1 .5.5v.5a.5.500 0 1 0 1 0v-.5a1.500 1.500 0 0 0-1.500-1.500H13V9h1.500a.5.500 0 0 0 0-1H13V7h.5A1.500 1.500 0 0 0 15 5.500V5a.5.500 0 0 0-1 0v.5a.5.500 0 0 1-.5.5zm-5.500 9.975V7H3V6h-.5a.5.500 0 0 1-.5-.5V5a.5.500 0 0 0-1 0v.5A1.500 1.500 0 0 0 2.500 7H3v1H1.500a.5.500 0 0 0 0 1H3v1h-.5A1.500 1.500 0 0 0 1 11.500v.5a.5.500 0 1 0 1 0v-.5a.5.500 0 0 1 .5-.5H3a5 5 0 0 0 4.500 4.975"/></svg></div>
<div id="strip"><i style="left:808px;top:5px;width:40px;height:8px;background:#f4f7f8;border-radius:4px"></i><i style="left:834px;top:6px;width:6px;height:5px;background:#c98a63;border-radius:3px"></i><i style="left:1139px;top:6px;width:12px;height:12px;background:#1f7f93;border-radius:6px"></i><i style="left:1056px;top:8px;width:12px;height:6px;background:#c9cfd2;border-radius:3px"></i></div>
</body>
</html>
